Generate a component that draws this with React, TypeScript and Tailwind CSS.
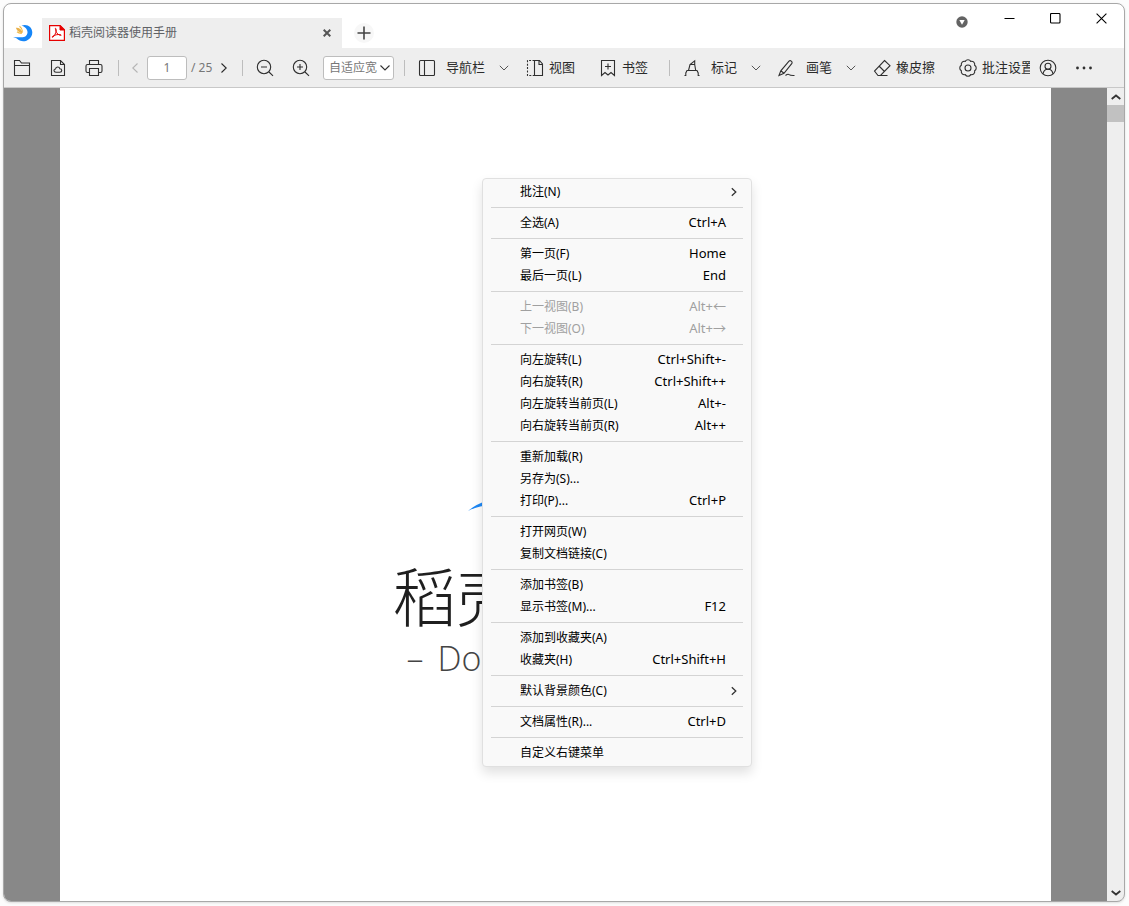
import { useState } from "react";
import type { ReactNode } from "react";

type MenuEntry = {
  label: string;
  shortcut?: string;
  submenu?: boolean;
  disabled?: boolean;
};

const menuGroups: MenuEntry[][] = [
  [{ label: "批注(N)", submenu: true }],
  [{ label: "全选(A)", shortcut: "Ctrl+A" }],
  [
    { label: "第一页(F)", shortcut: "Home" },
    { label: "最后一页(L)", shortcut: "End" },
  ],
  [
    { label: "上一视图(B)", shortcut: "Alt+←", disabled: true },
    { label: "下一视图(O)", shortcut: "Alt+→", disabled: true },
  ],
  [
    { label: "向左旋转(L)", shortcut: "Ctrl+Shift+-" },
    { label: "向右旋转(R)", shortcut: "Ctrl+Shift++" },
    { label: "向左旋转当前页(L)", shortcut: "Alt+-" },
    { label: "向右旋转当前页(R)", shortcut: "Alt++" },
  ],
  [
    { label: "重新加载(R)" },
    { label: "另存为(S)..." },
    { label: "打印(P)...", shortcut: "Ctrl+P" },
  ],
  [{ label: "打开网页(W)" }, { label: "复制文档链接(C)" }],
  [{ label: "添加书签(B)" }, { label: "显示书签(M)...", shortcut: "F12" }],
  [{ label: "添加到收藏夹(A)" }, { label: "收藏夹(H)", shortcut: "Ctrl+Shift+H" }],
  [{ label: "默认背景颜色(C)", submenu: true }],
  [{ label: "文档属性(R)...", shortcut: "Ctrl+D" }],
  [{ label: "自定义右键菜单" }],
];

export default function App() {
  return (
    <div className="h-screen bg-[#fcfcfc] pt-[3px] pl-[3px] pr-1 pb-1 font-['Noto_Sans','Noto_Sans_CJK_SC',sans-serif]">
      <div className="h-full flex flex-col overflow-hidden rounded-lg border border-[#a8a8a8] bg-white shadow-sm">
        <TitleBar />
        <Toolbar />
        <div className="relative flex-1 min-h-0 flex bg-[#888888]">
          <DocumentPage />
          <ScrollBar />
          <ContextMenu />
        </div>
      </div>
    </div>
  );
}

function TitleBar() {
  return (
    <header className="h-11 shrink-0 flex items-end">
      <div className="w-[38px] h-[30px] shrink-0 flex items-center justify-center">
        <AppLogo />
      </div>
      <div className="w-[300px] h-[30px] flex items-center bg-[#eeeeee] px-[7px]">
        <PdfIcon />
        <span className="ml-1 flex-1 text-xs text-[#606266]">稻壳阅读器使用手册</span>
        <button aria-label="关闭标签" className="w-4 h-4 flex items-center justify-center text-[#555]">
          <svg className="w-2 h-2" viewBox="0 0 8 8" fill="none" stroke="currentColor" strokeWidth={2}>
            <path d="M.7.7l6.6 6.6M7.3.7L.7 7.3" />
          </svg>
        </button>
      </div>
      <div className="h-[30px] ml-3 flex items-center">
        <button aria-label="新建标签" className="w-5 h-5 rounded-full bg-[#f7f7f7] flex items-center justify-center text-[#444]">
          <svg className="w-3.5 h-3.5" viewBox="0 0 14 14" fill="none" stroke="currentColor" strokeWidth={1.6}>
            <path d="M7 .5v13M.5 7h13" />
          </svg>
        </button>
      </div>
      <div className="ml-auto self-start flex text-black">
        <button aria-label="更多" className="mr-[18px] pt-1 h-8 flex items-center justify-center">
          <svg className="w-3 h-3" viewBox="0 0 12 12">
            <circle cx="6" cy="6" r="5.7" fill="#636363" />
            <path d="M3.3 4.1h5.4L6 8.8z" fill="#fff" />
          </svg>
        </button>
        <button aria-label="最小化" className="w-[46px] h-7 flex items-center justify-center">
          <svg className="w-[11px] h-[11px]" viewBox="0 0 11 11" stroke="currentColor">
            <path d="M.5 5.5h10" />
          </svg>
        </button>
        <button aria-label="最大化" className="w-[46px] h-7 flex items-center justify-center">
          <svg className="w-[11px] h-[11px]" viewBox="0 0 11 11" fill="none" stroke="currentColor" strokeWidth={1.1}>
            <rect x=".5" y=".5" width="9.5" height="9.5" rx="1" />
          </svg>
        </button>
        <button aria-label="关闭" className="w-[46px] h-7 flex items-center justify-center">
          <svg className="w-[11px] h-[11px]" viewBox="0 0 11 11" fill="none" stroke="currentColor" strokeWidth={1.1}>
            <path d="M.6.6l9.8 9.8M10.4.6L.6 10.4" />
          </svg>
        </button>
      </div>
    </header>
  );
}

function Toolbar() {
  const [page, setPage] = useState("1");

  return (
    <div className="h-10 shrink-0 flex items-center bg-[#eeeeee] border-b border-[#c8c8c8] text-[13px] text-[#2b2b2b] whitespace-nowrap">
      <IconButton label="打开">
        <Icon>
          <path d="M1.5 16.5v-15h5l2 2.5h8v12.5zM1.5 6.5h15" />
        </Icon>
      </IconButton>
      <IconButton label="云文档">
        <Icon>
          <path d="M2.5 1.5h9l4 4v11h-13zM11.5 1.5v4h4" />
          <path d="M7 13.2c-2.6 0-2.6-3.2-.5-3.2.2-2.6 4-2.6 4.3-.2 2.6 0 2.6 3.4 0 3.4z" />
        </Icon>
      </IconButton>
      <IconButton label="打印">
        <Icon>
          <path d="M4.5 5.5v-4h9v4M4.5 13.5h-2A1.5 1.5 0 0 1 1 12V7a1.5 1.5 0 0 1 1.5-1.5h13A1.5 1.5 0 0 1 17 7v5a1.5 1.5 0 0 1-1.5 1.5h-2M4.5 9.5h9v7h-9z" />
        </Icon>
      </IconButton>
      <span className="ml-1.5 mr-1 w-px h-4 bg-[#bdbdbd]" />
      <button aria-label="上一页" className="w-6 h-6 flex items-center justify-center text-[#b5b5b5]">
        <svg className="w-1.5 h-2.5" viewBox="0 0 6 10" fill="none" stroke="currentColor" strokeWidth={1.1}>
          <path d="M5.5.5L.8 5l4.7 4.5" />
        </svg>
      </button>
      <input
        aria-label="页码"
        value={page}
        onChange={(e) => setPage(e.target.value)}
        className="w-10 h-6 rounded-[3px] border border-[#bdbdbd] bg-white text-center text-xs text-[#777] outline-none"
      />
      <span className="ml-1 w-[23px] text-xs text-[#777]">/ 25</span>
      <button aria-label="下一页" className="w-5 h-6 flex items-center justify-center">
        <svg className="w-1.5 h-2.5" viewBox="0 0 6 10" fill="none" stroke="currentColor" strokeWidth={1.1}>
          <path d="M.5.5L5.2 5 .5 9.5" />
        </svg>
      </button>
      <span className="ml-2 mr-1 w-px h-4 bg-[#bdbdbd]" />
      <IconButton label="缩小">
        <Icon>
          <circle cx="8" cy="8" r="6.7" />
          <path d="M13 13l4 3.8M5 8h6" />
        </Icon>
      </IconButton>
      <IconButton label="放大">
        <Icon>
          <circle cx="8" cy="8" r="6.7" />
          <path d="M13 13l4 3.8M5 8h6M8 5v6" />
        </Icon>
      </IconButton>
      <div className="relative ml-1 w-[71px] h-6 shrink-0">
        <select
          aria-label="缩放"
          className="w-full h-full appearance-none rounded-[3px] border border-[#bdbdbd] bg-white pl-[5px] text-xs text-[#777] outline-none"
        >
          <option>自适应宽</option>
          <option>自适应高</option>
        </select>
        <svg className="absolute right-1 top-2 w-2.5 h-2 pointer-events-none" viewBox="0 0 10 8" fill="none" stroke="#333" strokeWidth={1.1}>
          <path d="M.5 1.5L5 6l4.5-4.5" />
        </svg>
      </div>
      <span className="ml-2.5 mr-[13px] w-px h-4 bg-[#bdbdbd]" />
      <div className="flex items-center gap-[17px]">
        <DropTool label="导航栏">
          <rect x="1.5" y="1.5" width="15" height="15" rx="1" />
          <path d="M6.5 1.5v15" />
        </DropTool>
        <div className="flex items-center gap-6">
          <Tool label="视图">
            <path d="M8.5 1.5h-7v15h7" strokeDasharray="2 1.4" />
            <path d="M8.5 1.5h5l3 3.5v11.5h-8zM13 1.5v4h3.5" />
          </Tool>
          <Tool label="书签">
            <path d="M2.5 1.5h13v15L12 13.5l-3 2.5-3-2.5-3.5 3zM6 7.5h6M9 4.5v6" />
          </Tool>
        </div>
      </div>
      <span className="ml-[21px] mr-[13px] w-px h-4 bg-[#bdbdbd]" />
      <div className="flex items-center gap-[17px]">
        <DropTool label="标记">
          <path d="M1.5 16.5h1.300V14l1.200-2.500h10l1.200 2.500v2.500h1.300M5.500 11.500L7 5.500l4.700-3.700v3.700l1 6M7 5.500h4.700" />
        </DropTool>
        <DropTool label="画笔">
          <path d="M1 16.5l1.8-4.7L11 2.2c1.3-1.3 3.9.4 2.900 2.200L6 14.3zM2.8 11.8L6 14.3M7.5 16.5c1.500-1.200 2.600-2 3.700-.8 1 1 2.800.8 5.300.8" />
        </DropTool>
        <Tool label="橡皮擦">
          <path d="M11.5 1.5l5.5 5.2-9.5 9.800H5L1.5 12zM6 7l5.5 5.5M5 16.5h9.5" />
        </Tool>
      </div>
      <button className="ml-6 w-[71px] min-w-0 flex items-center gap-[5px] overflow-hidden">
        <Icon>
          <path d="M6.24 2.35A3.2 3.2 0 0 1 11.76 2.35 3.2 3.2 0 0 1 15.65 6.24 3.2 3.2 0 0 1 15.65 11.76 3.2 3.2 0 0 1 11.76 15.65 3.2 3.2 0 0 1 6.24 15.65 3.2 3.2 0 0 1 2.35 11.76 3.2 3.2 0 0 1 2.35 6.24 3.2 3.2 0 0 1 6.24 2.35z" />
          <circle cx="9" cy="9" r="3" />
        </Icon>
        <span>批注设置</span>
      </button>
      <IconButton label="账户">
        <Icon>
          <circle cx="9" cy="9" r="7.8" />
          <circle cx="9" cy="7.3" r="3" />
          <path d="M4.2 14.8c.3-2.9 2.2-4.5 4.8-4.5s4.5 1.6 4.8 4.5" />
        </Icon>
      </IconButton>
      <IconButton label="更多工具">
        <svg className="w-[18px] h-[18px]" viewBox="0 0 18 18" fill="#2f2f2f">
          <circle cx="2.5" cy="9" r="1.4" />
          <circle cx="9" cy="9" r="1.4" />
          <circle cx="15.5" cy="9" r="1.4" />
        </svg>
      </IconButton>
    </div>
  );
}

function Icon({ children }: { children: ReactNode }) {
  return (
    <svg className="w-[18px] h-[18px] shrink-0" viewBox="0 0 18 18" fill="none" stroke="#2f2f2f" strokeWidth={1.1}>
      {children}
    </svg>
  );
}

function IconButton({ label, children }: { label: string; children: ReactNode }) {
  return (
    <button aria-label={label} className="w-9 h-9 shrink-0 flex items-center justify-center">
      {children}
    </button>
  );
}

function Tool({ label, children }: { label: string; children: ReactNode }) {
  return (
    <button className="flex items-center gap-[5px]">
      <Icon>{children}</Icon>
      {label}
    </button>
  );
}

function DropTool({ label, children }: { label: string; children: ReactNode }) {
  return (
    <button className="flex items-center gap-2.5">
      <Icon>{children}</Icon>
      {label}
      <svg className="ml-1 w-2.5 h-2" viewBox="0 0 10 8" fill="none" stroke="#555">
        <path d="M.8 1.8L5 6l4.2-4.2" />
      </svg>
    </button>
  );
}

function DocumentPage() {
  return (
    <main className="mx-14 flex-1 overflow-hidden bg-white pt-[312px] flex flex-col items-center">
      <svg className="w-[178px] h-[136px] shrink-0" viewBox="0 0 178 136">
        <path d="M1 111Q9 104 20 101C60 96 100 100 118 76 136 44 112 12 74 6c54-14 98 20 96 64-4 50-62 78-106 50C42 104 20 101 1 111z" fill="#1e88f5" />
      </svg>
      <div className="mt-7 w-[326px] text-[#1f1f1f]">
        <h1 className="text-[64px] leading-[66px] font-light">稻壳</h1>
        <p className="mt-2 ml-3.5 flex gap-3.5 text-[34px] leading-10 font-light text-[#444] font-['Open_Sans','Noto_Sans',sans-serif]">
          <span>–</span>
          <span>Doc</span>
        </p>
      </div>
    </main>
  );
}

function ScrollBar() {
  return (
    <div className="w-[17px] shrink-0 flex flex-col bg-[#eeeeee]">
      <button aria-label="向上滚动" className="h-[17px] flex items-center justify-center">
        <svg className="w-2.5 h-1.5" viewBox="0 0 10 6" fill="none" stroke="#333" strokeWidth={1.8}>
          <path d="M.7 5L5 1.5 9.3 5" />
        </svg>
      </button>
      <div className="h-[17px] bg-[#c1c1c1]" />
      <button aria-label="向下滚动" className="mt-auto h-[17px] flex items-center justify-center">
        <svg className="w-2.5 h-1.5" viewBox="0 0 10 6" fill="none" stroke="#333" strokeWidth={1.8}>
          <path d="M.7 1L5 4.5 9.3 1" />
        </svg>
      </button>
    </div>
  );
}

function ContextMenu() {
  return (
    <div
      role="menu"
      className="absolute left-[478px] top-[90px] w-[270px] rounded border border-[#e0e0e0] bg-[#f9f9f9] px-2 py-0.5 text-xs text-black shadow-[0_6px_12px_rgba(0,0,0,0.12)]"
    >
      {menuGroups.map((group, i) => (
        <div key={i}>
          {i > 0 && <hr className="my-1 border-[#d4d4d4]" />}
          {group.map((item) => (
            <button
              key={item.label}
              role="menuitem"
              disabled={item.disabled}
              className="w-full h-[22px] pl-[29px] pr-[17px] flex items-center justify-between disabled:text-[#a0a0a0]"
            >
              <span>{item.label}</span>
              {item.shortcut && <span className="text-[13px]">{item.shortcut}</span>}
              {item.submenu && (
                <svg className="-mr-[11px] w-1.5 h-2.5" viewBox="0 0 6 10" fill="none" stroke="#333" strokeWidth={1.3}>
                  <path d="M.8 1.2L4.8 5l-4 3.8" />
                </svg>
              )}
            </button>
          ))}
        </div>
      ))}
    </div>
  );
}

function AppLogo() {
  return (
    <svg className="w-5 h-[18px]" viewBox="0 0 20 18">
      <path d="M0 13.6C4 12.6 9 13.8 12.3 12.4 16.5 9.5 14.5 3.5 8.5 1.6c5.5-2.2 10.8 1.4 10.8 6.8C19.3 15 11 20 5 15.5 3.5 14.2 2 13.8 0 13.6z" fill="#1686f8" />
      <path d="M2.8 3.8c2.8-.4 5.8 1.4 7 5.2-2.8.4-5.6-1.6-7-5.2z" fill="#e9b04a" />
      <path d="M6.5 2.2c1.6 1.2 3 3.3 3.1 5.5M4 7.8c1.2 1 3 1.6 4.8 1.5" fill="none" stroke="#f0bb4c" strokeWidth={1.2} />
    </svg>
  );
}

function PdfIcon() {
  return (
    <svg className="w-4 h-4 shrink-0" viewBox="0 0 16 16" fill="none" stroke="#e60000">
      <path d="M.6.6h10.6l4.2 4.2v10.6H.6z" fill="#fff" strokeWidth={1.2} />
      <path d="M11 .6V5h4.4z" fill="#e60000" />
      <path d="M6.5 3.300c.9 0 .8 2.500.2 4.400-.8 2.300-2.300 4.700-3.400 4.600-.8-.4.900-1.800 3.900-2.500 3-.6 5-.2 5 .4-.3.700-3.300-.3-4.500-2.500-.8-1.700-1.700-4.400-1.200-4.400z" />
    </svg>
  );
}
